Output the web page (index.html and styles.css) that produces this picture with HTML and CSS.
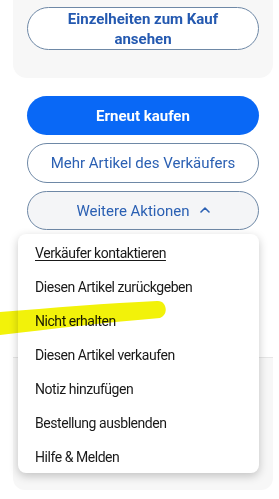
FILE: index.html
```html
<!DOCTYPE html>
<html lang="de">
<head>
<meta charset="utf-8">
<title>Bestellung</title>
<link rel="stylesheet" href="styles.css">
</head>
<body>
<div class="page">
  <section class="card card-top">
    <button class="btn btn-outline btn-bold">Einzelheiten zum Kauf<br>ansehen</button>
  </section>

  <div class="actions">
    <button class="btn btn-primary">Erneut kaufen</button>
    <button class="btn btn-outline">Mehr Artikel des Verkäufers</button>
    <div class="dropdown">
      <button class="btn btn-outline btn-open">Weitere Aktionen
        <svg class="chev" width="10" height="6" viewBox="0 0 10 6"><path d="M1 5 L5 1 L9 5" fill="none" stroke="currentColor" stroke-width="1.6" stroke-linecap="round" stroke-linejoin="round"/></svg>
      </button>
      <ul class="menu">
        <li class="menu-item focused">Verkäufer kontaktieren</li>
        <li class="menu-item">Diesen Artikel zurückgeben</li>
        <li class="menu-item">Nicht erhalten</li>
        <li class="menu-item">Diesen Artikel verkaufen</li>
        <li class="menu-item">Notiz hinzufügen</li>
        <li class="menu-item">Bestellung ausblenden</li>
        <li class="menu-item">Hilfe &amp; Melden</li>
      </ul>
    </div>
  </div>

  <section class="card card-bottom"></section>

  <svg class="marker" width="175" height="40" viewBox="0 0 175 40">
    <path d="M0 14 C50 10 110 5 157 3 C167 2 169 17 160 20 C110 24 50 31 0 37 Z" fill="#f2f20a"/>
  </svg>
</div>
</body>
</html>
```

FILE: styles.css
```css
* { box-sizing: border-box; }
html, body { margin: 0; padding: 0; background: #ffffff; }
body {
  font-family: Roboto, "Liberation Sans", Arial, sans-serif;
  color: #191919;
  width: 279px;
  height: 499px;
  overflow: hidden;
}
.page { position: relative; }

.card {
  background: #f7f7f7;
  margin: 0 6px 0 13px;
}
.card-top {
  padding: 7px 14px 28px;
  border-radius: 0 0 14px 14px;
}

.btn {
  display: flex;
  align-items: center;
  justify-content: center;
  width: 232px;
  border-radius: 22px;
  font-family: inherit;
  font-size: 15px;
  cursor: pointer;
  text-align: center;
}
.btn-outline {
  background: #ffffff;
  border: 1.5px solid #6e88a6;
  color: #2b60b3;
  height: 40px;
  font-weight: 400;
}
.btn-bold {
  height: 43px;
  font-weight: 700;
  font-size: 15px;
  line-height: 20px;
  color: #2459b0;
}
.btn-primary {
  background: #0968f6;
  border: none;
  color: #ffffff;
  font-weight: 700;
  font-size: 15px;
  height: 39px;
}
.btn-open {
  background: #f4f5f7;
  height: 39px;
  gap: 10px;
}
.chev { margin-top: -2px; }

.actions {
  margin: 18px 0 0 27px;
  display: flex;
  flex-direction: column;
  gap: 8px;
}
.dropdown { position: relative; }

.menu {
  position: absolute;
  top: 43px;
  left: -9px;
  width: 241px;
  margin: 0;
  padding: 1px 0 0;
  list-style: none;
  background: #ffffff;
  border-radius: 8px;
  box-shadow: 0 3px 10px rgba(0, 0, 0, 0.22);
  z-index: 2;
}
.menu-item {
  height: 34px;
  display: flex;
  align-items: center;
  padding: 2px 0 0 17px;
  font-size: 14px;
  letter-spacing: -0.45px;
  color: #191919;
}
.menu-item.focused { text-decoration: underline; text-underline-offset: 2px; }

.card-bottom {
  margin-top: 127px;
  height: 133px;
  border-top: 1px solid #e6e6e6;
  border-radius: 0 0 12px 12px;
}

.marker {
  position: absolute;
  left: 0;
  top: 298px;
  mix-blend-mode: multiply;
  z-index: 3;
  pointer-events: none;
}
```
